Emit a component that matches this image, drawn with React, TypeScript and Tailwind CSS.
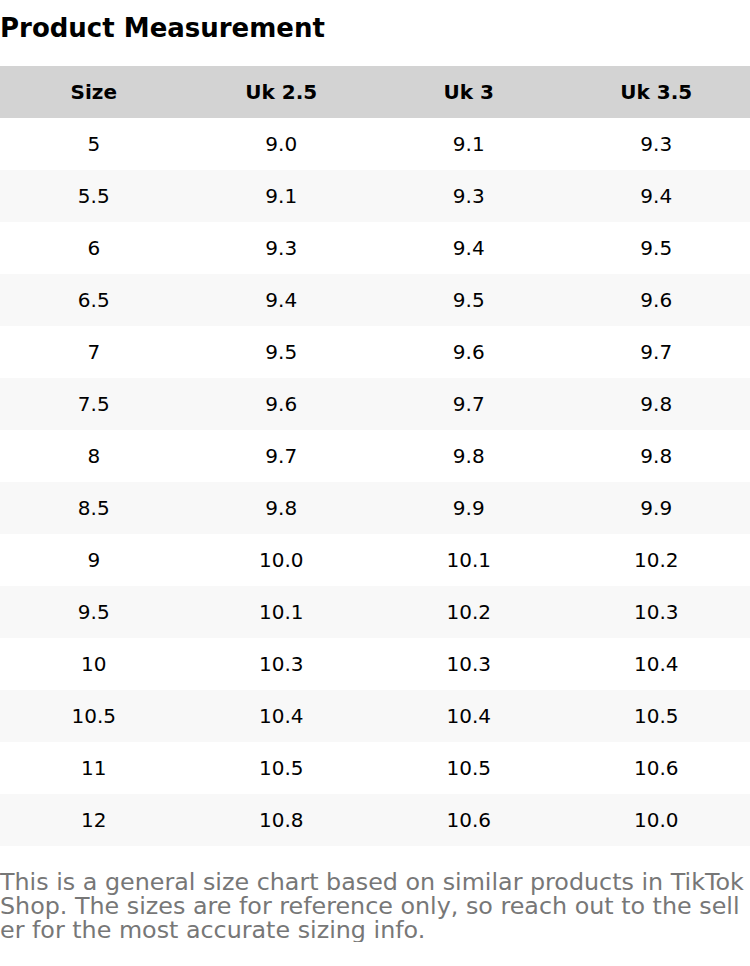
const rows: [string, string, string, string][] = [
  ["5", "9.0", "9.1", "9.3"],
  ["5.5", "9.1", "9.3", "9.4"],
  ["6", "9.3", "9.4", "9.5"],
  ["6.5", "9.4", "9.5", "9.6"],
  ["7", "9.5", "9.6", "9.7"],
  ["7.5", "9.6", "9.7", "9.8"],
  ["8", "9.7", "9.8", "9.8"],
  ["8.5", "9.8", "9.9", "9.9"],
  ["9", "10.0", "10.1", "10.2"],
  ["9.5", "10.1", "10.2", "10.3"],
  ["10", "10.3", "10.3", "10.4"],
  ["10.5", "10.4", "10.4", "10.5"],
  ["11", "10.5", "10.5", "10.6"],
  ["12", "10.8", "10.6", "10.0"],
];

export default function App() {
  return (
    <div className="w-[750px] bg-white text-black" style={{ fontFamily: '"DejaVu Sans", sans-serif' }}>
      <div className="h-[66px] flex items-center pb-[10px] text-[26px] font-bold leading-none">Product Measurement</div>
      <div className="grid grid-cols-4 h-[52px] bg-[#d3d3d3] items-center text-center text-[20px] font-bold">
        <div>Size</div>
        <div>Uk 2.5</div>
        <div>Uk 3</div>
        <div>Uk 3.5</div>
      </div>
      {rows.map((r, i) => (
        <div
          key={i}
          className={`grid grid-cols-4 h-[52px] items-center text-center text-[20px] ${i % 2 === 1 ? "bg-[#f8f8f8]" : "bg-white"}`}
        >
          {r.map((c, j) => (
            <div key={j}>{c}</div>
          ))}
        </div>
      ))}
      <p className="mt-[24px] text-[23.8px] leading-[24px] text-[#777777] break-all">
        This is a general size chart based on similar products in TikTok Shop. The sizes are for reference only, so reach out to the seller for the most accurate sizing info.
      </p>
    </div>
  );
}
